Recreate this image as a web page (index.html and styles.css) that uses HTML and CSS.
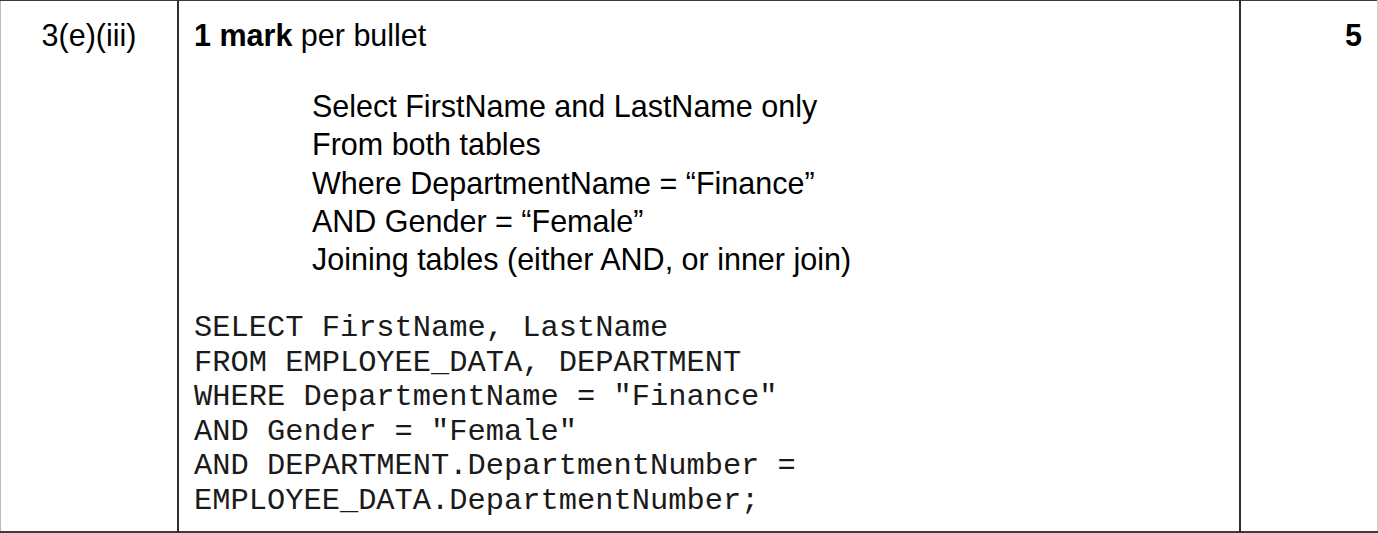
FILE: index.html
```html
<!DOCTYPE html>
<html lang="en">
<head>
    <meta charset="UTF-8">
    <meta name="viewport" content="width=device-width, initial-scale=1.0">
    <title>Mark scheme 3(e)(iii)</title>
    <link rel="stylesheet" href="styles.css">
</head>
<body>
    <table class="scheme">
        <tr>
            <td class="question">3(e)(iii)</td>
            <td class="answer">
                <p class="lead"><b>1 mark</b> per bullet</p>
                <ul class="bullets">
                    <li>Select FirstName and LastName only</li>
                    <li>From both tables</li>
                    <li>Where DepartmentName = “Finance”</li>
                    <li>AND Gender = “Female”</li>
                    <li>Joining tables (either AND, or inner join)</li>
                </ul>
                <pre class="code">SELECT FirstName, LastName
FROM EMPLOYEE_DATA, DEPARTMENT
WHERE DepartmentName = "Finance"
AND Gender = "Female"
AND DEPARTMENT.DepartmentNumber =
EMPLOYEE_DATA.DepartmentNumber;</pre>
            </td>
            <td class="marks">5</td>
        </tr>
    </table>
</body>
</html>
```

FILE: styles.css
```css
body {
    margin: 0;
    background: #fff;
    color: #000;
    font-family: "Liberation Sans", Arial, sans-serif;
}

.scheme {
    width: 1378px;
    height: 533px;
    border-collapse: collapse;
    table-layout: fixed;
    border-top: 1px solid #3c3c3c;
    border-bottom: 2px solid #3c3c3c;
    border-left: 1px solid #bbb;
    border-right: 1px solid #ccc;
}

.scheme td {
    vertical-align: top;
    font-size: 30.5px;
    line-height: 35px;
    padding: 0;
}

.question {
    width: 176px;
    text-align: center;
    border-right: 2px solid #2e2e2e;
    padding-top: 17px !important;
}

.answer {
    padding: 17px 16px 0 15px !important;
    border-right: 2px solid #2e2e2e;
}

.marks {
    width: 121px;
    text-align: right;
    font-weight: bold;
    padding: 17px 15px 0 0 !important;
}

.lead {
    margin: 0;
}

.bullets {
    list-style: none;
    margin: 34px 0 0;
    padding-left: 118px;
    line-height: 38.3px;
}

.code {
    margin: 33px 0 0;
    font-family: "Liberation Mono", "Courier New", monospace;
    font-size: 30.4px;
    line-height: 34.4px;
    color: #1a1a1a;
}
```
